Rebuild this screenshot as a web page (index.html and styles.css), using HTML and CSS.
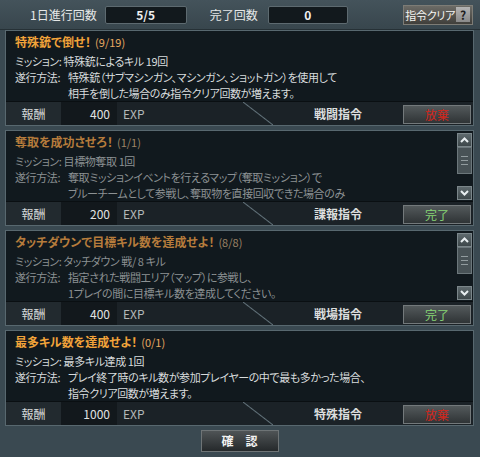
FILE: index.html
```html
<!DOCTYPE html>
<html lang="ja">
<head>
<meta charset="utf-8">
<link rel="stylesheet" href="styles.css">
</head>
<body>
<div class="top">
  <span class="tlabel first">1日進行回数</span>
  <span class="tbox b1">5/5</span>
  <span class="tlabel second">完了回数</span>
  <span class="tbox b2">0</span>
  <span class="clear"><span class="ctext">指令クリア</span><span class="q">?</span></span>
</div>

<div class="list">
  <div class="card">
    <div class="body">
      <div class="text">
        <div class="title">特殊銃で倒せ！<span class="cnt">(9/19)</span></div>
        <div class="line">ミッション: 特殊銃によるキル 19回</div>
        <div class="line"><span class="k">遂行方法:</span>特殊銃（サブマシンガン、マシンガン、ショットガン）を使用して</div>
        <div class="line ind">相手を倒した場合のみ指令クリア回数が増えます。</div>
      </div>
    </div>
    <div class="row">
      <div class="left"><span class="lbl">報酬</span><span class="val">400</span><span class="exp">EXP</span></div>
      <div class="diag"></div>
      <div class="cat">戦闘指令</div>
      <div class="btn red">放棄</div>
    </div>
  </div>

  <div class="card dim">
    <div class="body">
      <div class="text">
        <div class="title">奪取を成功させろ！<span class="cnt">(1/1)</span></div>
        <div class="line">ミッション: 目標物奪取 1回</div>
        <div class="line"><span class="k">遂行方法:</span>奪取ミッションイベントを行えるマップ（奪取ミッション）で</div>
        <div class="line ind">ブルーチームとして参戦し、奪取物を直接回収できた場合のみ</div>
      </div>
      <div class="scroll">
        <div class="sbtn"><svg width="9" height="6" viewBox="0 0 9 6"><polyline points="1,5 4.5,1.5 8,5" fill="none" stroke="#e8eef0" stroke-width="2"/></svg></div>
        <div class="thumb"><i></i><i></i><i></i></div>
        <div class="track"></div>
        <div class="sbtn"><svg width="9" height="6" viewBox="0 0 9 6"><polyline points="1,1 4.5,4.5 8,1" fill="none" stroke="#e8eef0" stroke-width="2"/></svg></div>
      </div>
    </div>
    <div class="row">
      <div class="left"><span class="lbl">報酬</span><span class="val">200</span><span class="exp">EXP</span></div>
      <div class="diag"></div>
      <div class="cat">諜報指令</div>
      <div class="btn green">完了</div>
    </div>
  </div>

  <div class="card dim">
    <div class="body">
      <div class="text">
        <div class="title">タッチダウンで目標キル数を達成せよ！<span class="cnt">(8/8)</span></div>
        <div class="line">ミッション: タッチダウン 戦/ 8 キル</div>
        <div class="line"><span class="k">遂行方法:</span>指定された戦闘エリア（マップ）に参戦し、</div>
        <div class="line ind">1プレイの間に目標キル数を達成してください。</div>
      </div>
      <div class="scroll">
        <div class="sbtn"><svg width="9" height="6" viewBox="0 0 9 6"><polyline points="1,5 4.5,1.5 8,5" fill="none" stroke="#e8eef0" stroke-width="2"/></svg></div>
        <div class="thumb"><i></i><i></i><i></i></div>
        <div class="track"></div>
        <div class="sbtn"><svg width="9" height="6" viewBox="0 0 9 6"><polyline points="1,1 4.5,4.5 8,1" fill="none" stroke="#e8eef0" stroke-width="2"/></svg></div>
      </div>
    </div>
    <div class="row">
      <div class="left"><span class="lbl">報酬</span><span class="val">400</span><span class="exp">EXP</span></div>
      <div class="diag"></div>
      <div class="cat">戦場指令</div>
      <div class="btn green">完了</div>
    </div>
  </div>

  <div class="card">
    <div class="body">
      <div class="text">
        <div class="title">最多キル数を達成せよ！<span class="cnt">(0/1)</span></div>
        <div class="line">ミッション: 最多キル達成 1回</div>
        <div class="line"><span class="k">遂行方法:</span>プレイ終了時のキル数が参加プレイヤーの中で最も多かった場合、</div>
        <div class="line ind">指令クリア回数が増えます。</div>
      </div>
    </div>
    <div class="row">
      <div class="left"><span class="lbl">報酬</span><span class="val">1000</span><span class="exp">EXP</span></div>
      <div class="diag"></div>
      <div class="cat">特殊指令</div>
      <div class="btn red">放棄</div>
    </div>
  </div>
</div>

<div class="footer">
  <div class="ok">確　認</div>
</div>
</body>
</html>
```

FILE: styles.css
```css
html, body {
  margin: 0;
  padding: 0;
}
body {
  width: 480px;
  height: 457px;
  overflow: hidden;
  background: #3a4951;
  font-family: "Noto Sans CJK JP", "Noto Sans", sans-serif;
  font-size: 12px;
  color: #d8dcdd;
}

/* top bar */
.top {
  height: 30px;
  display: flex;
  align-items: center;
  box-sizing: border-box;
  background: linear-gradient(#44535b, #38464d);
  border-bottom: 1px solid #263136;
}
.tlabel {
  color: #e6e8e8;
  font-size: 12px;
  line-height: 14px;
}
.first { margin-left: 30px; }
.second { margin-left: 23px; }
.tbox {
  height: 18px;
  box-sizing: border-box;
  border: 1px solid #5d6a70;
  background: #12191d;
  color: #f0f0f0;
  font-weight: bold;
  font-size: 12px;
  line-height: 16px;
  text-align: center;
  border-radius: 2px;
}
.b1 { width: 82px; margin-left: 8px; }
.b2 { width: 80px; margin-left: 10px; }
.clear {
  margin-left: auto;
  margin-right: 7px;
  height: 20px;
  width: 70px;
  box-sizing: border-box;
  display: flex;
  align-items: center;
  justify-content: flex-end;
  padding-right: 2px;
  gap: 1px;
  border: 1px solid #7d7c76;
  background: linear-gradient(#6c6b66, #403f3b);
  color: #f4f4f2;
  white-space: nowrap;
}
.ctext {
  font-size: 11px;
  font-feature-settings: "palt";
  letter-spacing: -0.3px;
  line-height: 14px;
}
.q {
  flex: none;
  width: 14px;
  height: 15px;
  background: linear-gradient(#b4b4b4, #8a8a8a);
  color: #1e1e1e;
  font-weight: bold;
  font-size: 12px;
  line-height: 15px;
  text-align: center;
}

/* list */
.list {
  display: flex;
  flex-direction: column;
  gap: 4px;
  padding: 0 6px 0 5px;
}
.card {
  height: 96px;
  box-sizing: border-box;
  border: 1px solid #58686f;
  background: #11191e;
  display: flex;
  flex-direction: column;
}
.body {
  height: 70px;
  display: flex;
  border-bottom: 1px solid #0a0f12;
}
.text {
  flex: 1;
  padding: 2px 0 0 9px;
  font-size: 11px;
  font-feature-settings: "palt";
  letter-spacing: -0.4px;
  white-space: nowrap;
  overflow: hidden;
}
.title {
  color: #f2a33a;
  font-weight: bold;
  font-size: 12px;
  letter-spacing: 0;
  line-height: 17px;
  margin-bottom: 2px;
}
.cnt {
  font-weight: normal;
  color: #e6a860;
  font-size: 11px;
  margin-left: 4px;
}
.line {
  line-height: 16px;
}
.k {
  display: inline-block;
  width: 53px;
}
.ind {
  padding-left: 53px;
}
.dim .title { color: #b67c3c; }
.dim .cnt { color: #9c8466; }
.dim .line { color: #8c9193; }

/* scrollbar */
.scroll {
  width: 15px;
  margin: 2px 1px 1px 0;
  display: flex;
  flex-direction: column;
}
.sbtn {
  height: 14px;
  box-sizing: border-box;
  border: 1px solid #7b868a;
  background: linear-gradient(#5f6a6e, #3d474a);
  display: flex;
  align-items: center;
  justify-content: center;
}
.thumb {
  height: 27px;
  box-sizing: border-box;
  border: 1px solid #6c777b;
  background: #485256;
  display: flex;
  flex-direction: column;
  justify-content: center;
  align-items: center;
  gap: 3px;
}
.thumb i {
  display: block;
  width: 7px;
  height: 1px;
  background: #929c9f;
}
.track { flex: 1; }

/* reward row */
.row {
  flex: 1;
  display: flex;
  background: #1b2227;
}
.left {
  width: 237px;
  display: flex;
  align-items: stretch;
}
.lbl {
  width: 55px;
  background: #222a2f;
  text-align: center;
  line-height: 23px;
  color: #d4d8d8;
}
.val {
  width: 56px;
  background: #12181c;
  text-align: right;
  padding-right: 7px;
  box-sizing: border-box;
  line-height: 23px;
  color: #e0e2e2;
}
.exp {
  margin-left: 6px;
  line-height: 23px;
  color: #b4b8b9;
  font-size: 12px;
}
.diag {
  width: 30px;
  background: linear-gradient(to bottom left, transparent calc(50% - 1px), #62727a 50%, transparent calc(50% + 1px));
}
.cat {
  width: 130px;
  text-align: center;
  font-weight: bold;
  line-height: 23px;
  color: #dcdede;
}
.btn {
  width: 68px;
  height: 19px;
  margin: 3px 2px 0 0;
  box-sizing: border-box;
  border: 1px solid #73797b;
  background: linear-gradient(#53595b, #2f3436);
  text-align: center;
  line-height: 17px;
  font-size: 12px;
}
.red { color: #d2261c; }
.green { color: #86d474; }

/* footer */
.footer {
  display: flex;
  justify-content: center;
  padding-top: 4px;
}
.ok {
  width: 78px;
  height: 22px;
  box-sizing: border-box;
  border: 1px solid #6e7476;
  background: linear-gradient(#4f5456, #25292b);
  color: #f2f2f2;
  font-weight: bold;
  font-size: 12px;
  line-height: 20px;
  text-align: center;
  margin-left: -1px;
}
```
